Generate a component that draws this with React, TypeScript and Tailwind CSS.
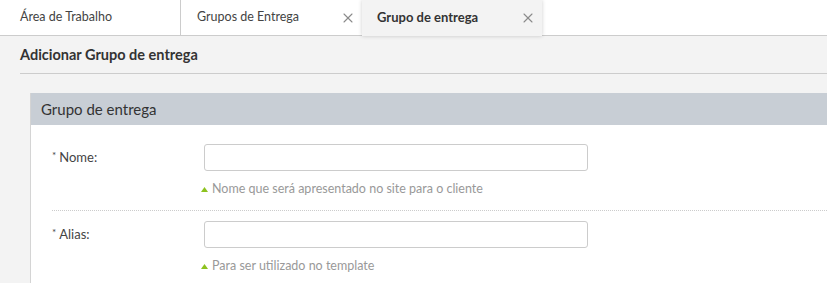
import { X } from "lucide-react";

const fields = [
  { label: "Nome:", hint: "Nome que será apresentado no site para o cliente" },
  { label: "Alias:", hint: "Para ser utilizado no template" },
];

export default function App() {
  return (
    <div className="flex h-[283px] w-[827px] flex-col overflow-hidden bg-[#f3f3f3] font-['Lato',sans-serif] text-[#333]">
      {/* Tabs */}
      <div className="flex h-[36px] shrink-0 border-b border-[#cccccc] bg-white">
        <div className="flex w-[181px] items-center border-r border-[#cccccc] pl-[20px] text-[12.5px] text-[#444]">
          Área de Trabalho
        </div>
        <div className="flex w-[181px] items-center justify-between pl-[16px] pr-[6px] text-[12.5px] text-[#444]">
          Grupos de Entrega
          <X className="h-[16px] w-[16px] text-[#8a8a8a]" strokeWidth={1.6} />
        </div>
        <div className="relative z-10 -mb-px flex w-[180px] items-center justify-between bg-[#f3f3f3] pl-[15px] pr-[6px] text-[13px] font-bold text-[#333] shadow-[0_0_4px_rgba(0,0,0,0.2)]">
          Grupo de entrega
          <X className="h-[16px] w-[16px] text-[#8a8a8a]" strokeWidth={1.6} />
        </div>
      </div>

      {/* Page title */}
      <div className="ml-[20px] flex h-[38px] shrink-0 items-center border-b border-[#cccccc] text-[14.5px] font-bold text-[#333]">
        Adicionar Grupo de entrega
      </div>

      {/* Panel */}
      <div className="ml-[30px] mt-[19px] flex-1 border-l border-[#d4d4d4] bg-white">
        <div className="flex h-[32px] items-center bg-[#c8ced5] pl-[10px] text-[15px] text-[#333]">
          Grupo de entrega
        </div>
        <div className="pl-[21px]">
          {fields.map((f, i) => (
            <div
              key={f.label}
              className={i === 0 ? "border-b border-dotted border-[#cccccc] pt-[19px] pb-[11px]" : "pt-[10px]"}
            >
              <div className="flex items-center">
                <div className="w-[152px] text-[13px] text-[#444]">
                  <span className="mr-[3px] align-top text-[10px]">*</span>
                  {f.label}
                </div>
                <div className="h-[27px] w-[384px] rounded-[3px] border border-[#cccccc] bg-white" />
              </div>
              <div className="ml-[149px] mt-[9px] flex items-center text-[12.5px] text-[#999]">
                <svg width="7" height="5" viewBox="0 0 7 5" className="mr-[4px]">
                  <polygon points="3.5,0 7,5 0,5" fill="#8dc21f" />
                </svg>
                {f.hint}
              </div>
            </div>
          ))}
        </div>
      </div>
    </div>
  );
}
